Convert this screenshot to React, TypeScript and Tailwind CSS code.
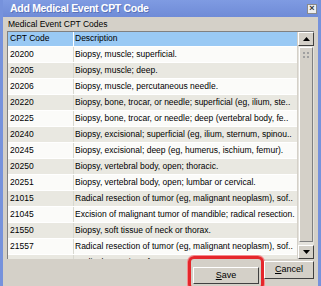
import React from 'react';

const rows: [string, string][] = [
  ['20200', 'Biopsy, muscle; superficial.'],
  ['20205', 'Biopsy, muscle; deep.'],
  ['20206', 'Biopsy, muscle, percutaneous needle.'],
  ['20220', 'Biopsy, bone, trocar, or needle; superficial (eg, ilium, ste..'],
  ['20225', 'Biopsy, bone, trocar, or needle; deep (vertebral body, fe..'],
  ['20240', 'Biopsy, excisional; superficial (eg, ilium, sternum, spinou..'],
  ['20245', 'Biopsy, excisional; deep (eg, humerus, ischium, femur).'],
  ['20250', 'Biopsy, vertebral body, open; thoracic.'],
  ['20251', 'Biopsy, vertebral body, open; lumbar or cervical.'],
  ['21015', 'Radical resection of tumor (eg, malignant neoplasm), sof..'],
  ['21045', 'Excision of malignant tumor of mandible; radical resection.'],
  ['21550', 'Biopsy, soft tissue of neck or thorax.'],
  ['21557', 'Radical resection of tumor (eg, malignant neoplasm), sof..'],
  ['21600', 'Radical resection of sternum; ..'],
];

const Arrow: React.FC<{ up?: boolean }> = ({ up }) => (
  <div className="h-[14px] w-[16px] shrink-0 bg-[#d4d0c8] border border-t-white border-l-white border-r-[#404040] border-b-[#404040] flex items-center justify-center">
    <svg width="7" height="4" viewBox="0 0 7 4">
      {up ? <polygon points="0,4 7,4 3.5,0" fill="#000" /> : <polygon points="0,0 7,0 3.5,4" fill="#000" />}
    </svg>
  </div>
);

const App: React.FC = () => {
  return (
    <div className="w-[321px] h-[286px] overflow-hidden bg-[#7692dc] flex flex-col px-[3px] pb-[3px] font-['Liberation_Sans',Arial,sans-serif] text-black">
      {/* title bar */}
      <div className="h-[17px] shrink-0 flex items-center justify-between pl-[7px] bg-gradient-to-b from-[#7f9be2] to-[#6f8bd7]">
        <span className="text-[10.5px] font-bold text-white tracking-[-0.3px] [text-shadow:1px_1px_0_#5a72b8]">
          Add Medical Event CPT Code
        </span>
        <div className="w-[10px] h-[10px] mr-[1px] bg-[#eeeeee] border border-[#8a8a8a] flex items-center justify-center text-[9px] leading-none font-bold text-[#333]">
          ×
        </div>
      </div>

      {/* body */}
      <div className="flex-1 bg-[#d4d0c8] flex flex-col pl-[4px] pr-[4px]">
        <div className="text-[8.5px] leading-none pt-[3px] pb-[2px] pl-[1px]">Medical Event CPT Codes</div>

        <div className="h-[228px] shrink-0 flex border-l border-t border-[#808080] bg-white overflow-hidden">
          <div className="flex-1 overflow-hidden text-[8.5px] leading-none">
            <div className="h-[15px] flex bg-[#99c9f4] border-b border-white">
              <div className="w-[66px] shrink-0 pl-[2px] flex items-center border-r border-white">CPT Code</div>
              <div className="flex-1 pl-[1px] flex items-center">Description</div>
            </div>
            {rows.map(([code, desc], i) => (
              <div
                key={code}
                className={`h-[16px] flex border-b border-white ${i % 2 === 0 ? 'bg-[#fbfbf9]' : 'bg-[#e9e8e1]'}`}
              >
                <div className="w-[66px] shrink-0 pl-[2px] flex items-center border-r border-[#d8d8d0]">{code}</div>
                <div className="flex-1 pl-[1px] flex items-center whitespace-nowrap overflow-hidden">{desc}</div>
              </div>
            ))}
          </div>

          {/* scrollbar */}
          <div className="w-[17px] shrink-0 bg-[#e4e2dc] flex flex-col border-l border-[#d4d0c8]">
            <Arrow up />
            <div className="flex-1 flex flex-col pt-[1px]">
              <div className="h-[195px] mx-[1px] bg-[#d4d0c8] border border-t-white border-l-white border-r-[#808080] border-b-[#808080] flex items-start justify-center pt-[4px]">
                <svg width="6" height="6" viewBox="0 0 6 6">
                  <rect x="0" y="0" width="2" height="2" fill="#a0a0a0" />
                  <rect x="4" y="0" width="2" height="2" fill="#a0a0a0" />
                  <rect x="0" y="4" width="2" height="2" fill="#a0a0a0" />
                  <rect x="4" y="4" width="2" height="2" fill="#a0a0a0" />
                </svg>
              </div>
            </div>
            <Arrow />
          </div>
        </div>

        {/* buttons */}
        <div className="flex justify-end items-start mt-[-3px]">
          <div className="rounded-[6px] border-[3px] border-[#e5262b] px-[2px] py-[2px] shadow-[0_0_0_1px_#f58a8d]">
            <button className="w-[66px] h-[17px] bg-[#d4d0c8] border border-t-white border-l-white border-r-[#404040] border-b-[#404040] text-[9px] leading-none">
              <span className="underline">S</span>ave
            </button>
          </div>
          <button className="mt-[5px] w-[50px] h-[18px] bg-[#d4d0c8] border border-t-white border-l-white border-r-[#404040] border-b-[#404040] text-[9px] leading-none">
            <span className="underline">C</span>ancel
          </button>
        </div>
      </div>
    </div>
  );
};

export default App;
